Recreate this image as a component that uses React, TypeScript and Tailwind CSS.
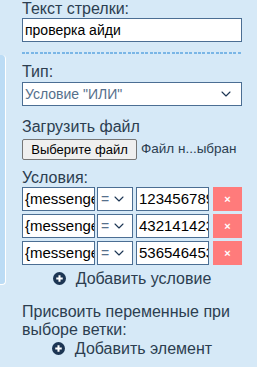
import { ChevronDown } from "lucide-react"

const rows = ["123456789", "432141423", "536546453"]

function PlusCircle() {
  return (
    <svg width="13" height="13" viewBox="0 0 14 14" className="shrink-0">
      <circle cx="7" cy="7" r="7" fill="#1c3553" />
      <path d="M7 3.5v7M3.5 7h7" stroke="#fff" strokeWidth="2.2" />
    </svg>
  )
}

export default function App() {
  return (
    <div className="relative w-[257px] h-[367px] overflow-hidden bg-[#d6e9f7] font-['Liberation_Sans',Arial,sans-serif] text-[#2c3e50]">
      {/* edge of the panel behind */}
      <div className="absolute left-0 top-[55px] h-[230px] w-[6px] rounded-r-[4px] border-r border-b border-white bg-[#bcdcf5]" />

      <div className="flex flex-col pl-[22px] pr-[15px]">
        <div className="text-[16px] leading-[18px]">Текст стрелки:</div>
        <div className="h-[24px] border border-[#4b6e93] bg-white px-[2px] text-[14px] leading-[22px] text-black">
          проверка айди
        </div>

        <div className="mt-[10px] h-[2px] bg-[repeating-linear-gradient(90deg,#7ab6e6_0_3px,transparent_3px_4.4px)]" />

        <div className="mt-[9px] text-[16px] leading-[18px]">Тип:</div>
        <div className="mt-[1px] flex h-[24px] items-center justify-between border border-[#4b6e93] bg-white pl-[2px] pr-[7px] text-[14px] text-[#56708c]">
          <span>Условие "ИЛИ"</span>
          <ChevronDown size={16} strokeWidth={1.6} color="#1c3553" />
        </div>

        <div className="mt-[12px] text-[16px] leading-[18px]">Загрузить файл</div>
        <div className="mt-[3px] flex items-center gap-[4px]">
          <div className="flex h-[21px] w-[115px] items-center justify-center rounded-[2px] border border-[#767676] bg-[#efefef] text-[13px] text-black">
            Выберите файл
          </div>
          <span className="whitespace-nowrap text-[13.5px] text-[#2c3e50]">Файл н...ыбран</span>
        </div>

        <div className="mt-[9px] text-[16px] leading-[18px]">Условия:</div>
        <div className="flex flex-col gap-[3px]">
          {rows.map((v) => (
            <div key={v} className="flex h-[24px] items-stretch">
              <div className="w-[73px] overflow-hidden whitespace-nowrap border border-[#4b6e93] bg-white pl-[2px] text-[15px] leading-[22px] text-black">
                {"{messenger"}
              </div>
              <div className="ml-[2px] flex w-[36px] items-center gap-[2px] border border-[#4b6e93] bg-white pl-[3px] text-[14px] text-[#56708c]">
                <span>=</span>
                <ChevronDown size={16} strokeWidth={1.6} color="#1c3553" />
              </div>
              <div className="ml-[3px] w-[73px] overflow-hidden whitespace-nowrap border border-[#4b6e93] bg-white pl-[2px] text-[15px] leading-[22px] text-black">
                {v}
              </div>
              <div className="ml-[4px] flex w-[29px] items-center justify-center bg-[#ff7b7b] text-[11px] font-bold text-white">
                ×
              </div>
            </div>
          ))}
        </div>

        <div className="mt-[4px] flex items-center justify-center gap-[10px] text-[16px] leading-[19px]">
          <PlusCircle />
          <span>Добавить условие</span>
        </div>

        <div className="mt-[15px] text-[16px] leading-[18px]">
          Присвоить переменные при выборе ветки:
        </div>
        <div className="flex items-center justify-center gap-[10px] text-[16px] leading-[19px]">
          <PlusCircle />
          <span>Добавить элемент</span>
        </div>
      </div>
    </div>
  )
}
